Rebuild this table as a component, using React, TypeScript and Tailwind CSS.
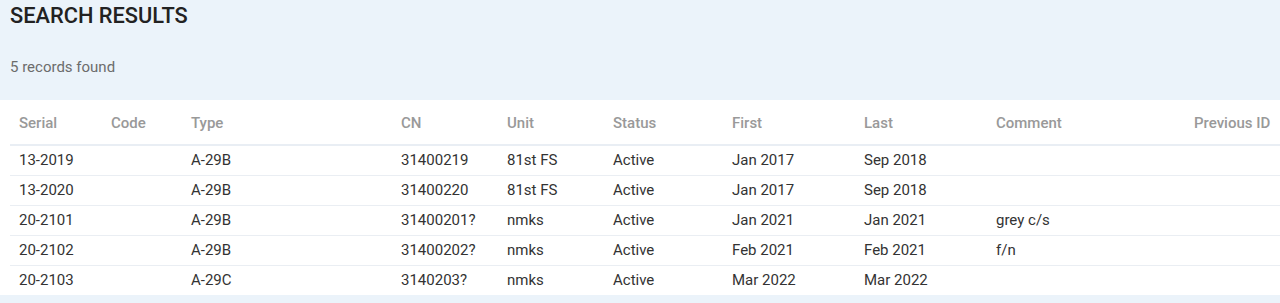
import React from 'react';

type Record = {
  serial: string;
  code: string;
  type: string;
  cn: string;
  unit: string;
  status: string;
  first: string;
  last: string;
  comment: string;
  previousId: string;
};

const records: Record[] = [
  { serial: '13-2019', code: '', type: 'A-29B', cn: '31400219', unit: '81st FS', status: 'Active', first: 'Jan 2017', last: 'Sep 2018', comment: '', previousId: '' },
  { serial: '13-2020', code: '', type: 'A-29B', cn: '31400220', unit: '81st FS', status: 'Active', first: 'Jan 2017', last: 'Sep 2018', comment: '', previousId: '' },
  { serial: '20-2101', code: '', type: 'A-29B', cn: '31400201?', unit: 'nmks', status: 'Active', first: 'Jan 2021', last: 'Jan 2021', comment: 'grey c/s', previousId: '' },
  { serial: '20-2102', code: '', type: 'A-29B', cn: '31400202?', unit: 'nmks', status: 'Active', first: 'Feb 2021', last: 'Feb 2021', comment: 'f/n', previousId: '' },
  { serial: '20-2103', code: '', type: 'A-29C', cn: '3140203?', unit: 'nmks', status: 'Active', first: 'Mar 2022', last: 'Mar 2022', comment: '', previousId: '' },
];

// column headings and widths (px)
const columns: { label: string; key: keyof Record; width: string }[] = [
  { label: 'Serial', key: 'serial', width: 'w-[92px]' },
  { label: 'Code', key: 'code', width: 'w-[80px]' },
  { label: 'Type', key: 'type', width: 'w-[210px]' },
  { label: 'CN', key: 'cn', width: 'w-[106px]' },
  { label: 'Unit', key: 'unit', width: 'w-[106px]' },
  { label: 'Status', key: 'status', width: 'w-[119px]' },
  { label: 'First', key: 'first', width: 'w-[132px]' },
  { label: 'Last', key: 'last', width: 'w-[132px]' },
  { label: 'Comment', key: 'comment', width: 'w-[198px]' },
  { label: 'Previous ID', key: 'previousId', width: 'w-[95px]' },
];

const App: React.FC = () => {
  return (
    <div className="min-h-[303px] bg-[#ebf3fa] font-['Roboto',sans-serif] pb-[8px]">
      {/* Header */}
      <div className="px-[10px] h-[100px]">
        <h1 className="pt-[3px] text-[21.8px] leading-[26px] font-medium text-[#222]">SEARCH RESULTS</h1>
        <p className="mt-[28px] text-[15px] leading-[20px] text-[#6c6c6c]">5 records found</p>
      </div>

      {/* Results table */}
      <div className="bg-white pl-[10px]">
        <table className="w-[1270px] table-fixed border-collapse text-[15px]">
          <colgroup>
            {columns.map((col) => (
              <col key={col.key} className={col.width} />
            ))}
          </colgroup>
          <thead>
            <tr className="border-b-2 border-[#e9eef4]">
              {columns.map((col) => (
                <th
                  key={col.key}
                  className="h-[45px] pl-[9px] pt-[1px] text-left align-middle font-medium text-[#999] leading-[20px] whitespace-nowrap"
                >
                  {col.label}
                </th>
              ))}
            </tr>
          </thead>
          <tbody>
            {records.map((rec, i) => (
              <tr key={rec.serial} className={i < records.length - 1 ? 'border-b border-[#eaeef3]' : ''}>
                {columns.map((col) => (
                  <td
                    key={col.key}
                    className="h-[30px] pl-[9px] text-left align-middle text-[#333] leading-[20px] whitespace-nowrap"
                  >
                    {rec[col.key]}
                  </td>
                ))}
              </tr>
            ))}
          </tbody>
        </table>
      </div>
    </div>
  );
};

export default App;
